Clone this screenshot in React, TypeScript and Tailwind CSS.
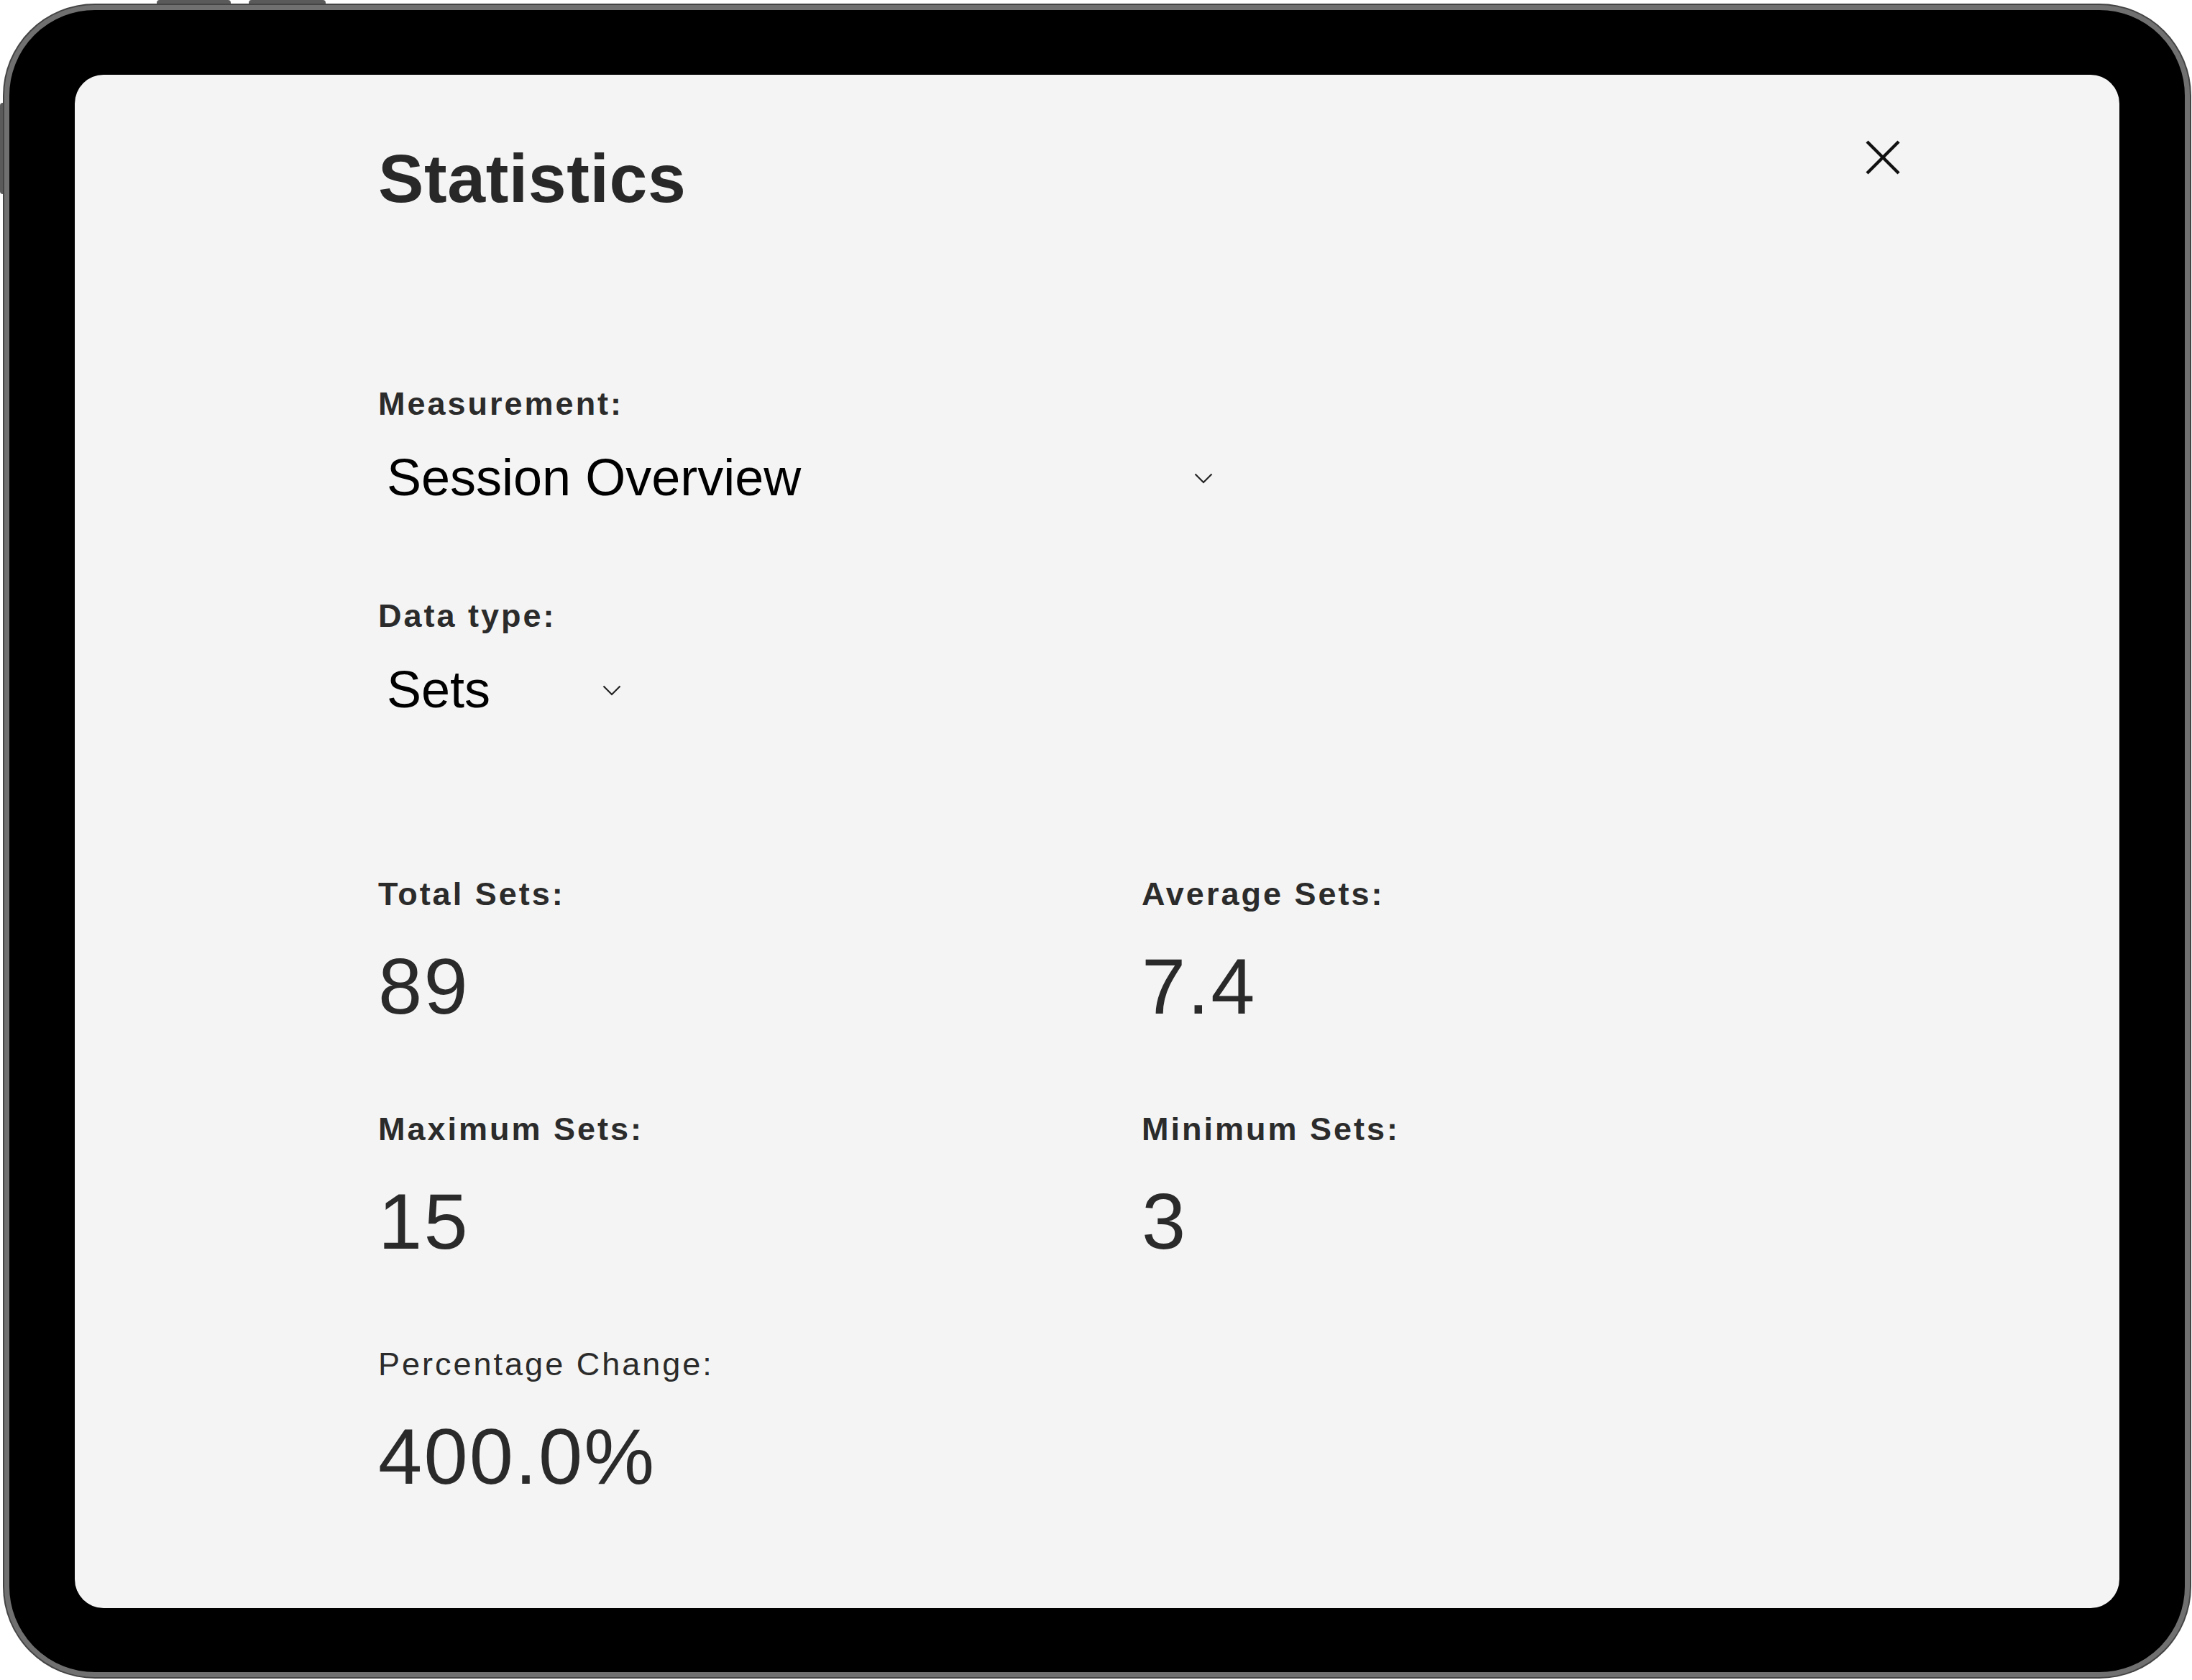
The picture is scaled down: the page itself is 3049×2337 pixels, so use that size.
import React from 'react';

const stats = [
  { label: 'Total Sets:', value: '89', bold: true },
  { label: 'Average Sets:', value: '7.4', bold: true },
  { label: 'Maximum Sets:', value: '15', bold: true },
  { label: 'Minimum Sets:', value: '3', bold: true },
  { label: 'Percentage Change:', value: '400.0%', bold: false },
];

function Chevron() {
  return (
    <svg width="26" height="15" viewBox="0 0 26 15" fill="none" className="shrink-0 mt-[2px]">
      <polyline points="1.5,1.5 13,13 24.5,1.5" stroke="#222" strokeWidth="2.2" />
    </svg>
  );
}

function CloseIcon() {
  return (
    <svg width="48" height="48" viewBox="0 0 48 48" fill="none" className="shrink-0 -mt-[6px]">
      <line x1="2" y1="2" x2="46" y2="46" stroke="#111" strokeWidth="4.5" />
      <line x1="46" y1="2" x2="2" y2="46" stroke="#111" strokeWidth="4.5" />
    </svg>
  );
}

function Select({ value, width }: { value: string; width: string }) {
  return (
    <div className={`flex items-center ${width} pl-[12px] pr-[14px]`}>
      <span className="text-[72px] leading-none text-black">{value}</span>
      <span className="ml-auto">
        <Chevron />
      </span>
    </div>
  );
}

function Label({ children, bold = true }: { children: React.ReactNode; bold?: boolean }) {
  return (
    <div
      className={`text-[45px] leading-none tracking-[3px] text-[#2b2b2b] ${bold ? 'font-bold' : 'font-normal'}`}
    >
      {children}
    </div>
  );
}

export default function App() {
  return (
    <div className="relative w-[3049px] h-[2337px] bg-white pt-[5px] pl-[4px] font-['Liberation_Sans',Arial,sans-serif]">
      {/* hardware buttons */}
      <div className="absolute left-[218px] top-0 w-[103px] h-[7px] rounded-t-[4px] bg-[#5a5a5a]" />
      <div className="absolute left-[346px] top-0 w-[107px] h-[7px] rounded-t-[4px] bg-[#5a5a5a]" />
      <div className="absolute left-0 top-[143px] w-[6px] h-[127px] rounded-l-[4px] bg-[#5a5a5a]" />

      <div className="relative w-[3044px] h-[2330px] rounded-[128px] bg-[#444] p-[2px]">
        <div className="flex h-full w-full rounded-[126px] border-[7px] border-[#707070] bg-black pt-[90px] pl-[91px] pr-[91px] pb-[89px]">
          <div className="flex-1 flex flex-col rounded-[40px] bg-[#f4f4f4] pt-[97px] pl-[422px] pr-[305px]">
            <div className="flex items-start justify-between">
              <h1 className="text-[95px] leading-none font-bold tracking-[0.6px] text-[#282828]">Statistics</h1>
              <CloseIcon />
            </div>

            <div className="mt-[243px]">
              <Label>Measurement:</Label>
            </div>
            <div className="mt-[44px]">
              <Select value="Session Overview" width="w-[1175px]" />
            </div>

            <div className="mt-[134px]">
              <Label>Data type:</Label>
            </div>
            <div className="mt-[44px]">
              <Select value="Sets" width="w-[352px]" />
            </div>

            <div className="mt-[226px] grid grid-cols-[1062px_1fr] gap-y-[121px]">
              {stats.map((s) => (
                <div key={s.label}>
                  <Label bold={s.bold}>{s.label}</Label>
                  <div className="mt-[51px] text-[110px] leading-none tracking-[0.02em] text-[#2a2a2a]">
                    {s.value}
                  </div>
                </div>
              ))}
            </div>
          </div>
        </div>
      </div>
    </div>
  );
}
